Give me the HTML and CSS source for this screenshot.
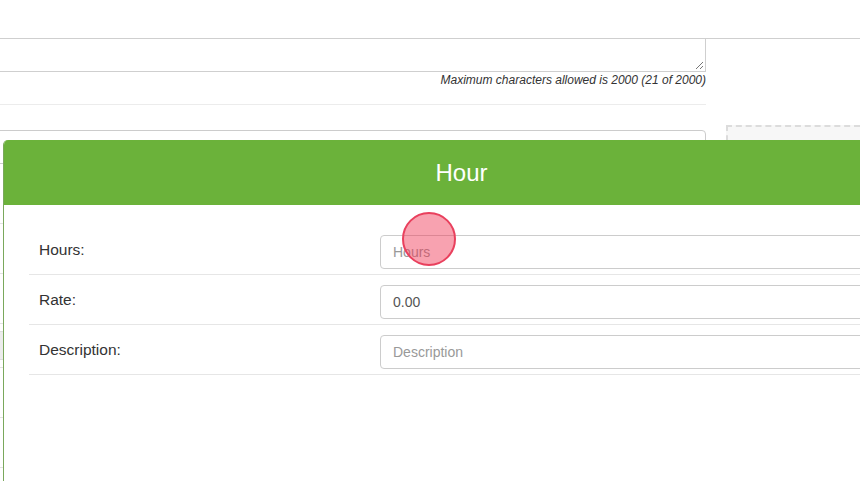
FILE: index.html
```html
<!DOCTYPE html>
<html lang="en">
<head>
<meta charset="utf-8">
<title>Hour</title>
<link rel="stylesheet" href="styles.css">
</head>
<body>
<div class="page">
  <div class="topbar"></div>
  <div class="layout">
    <div class="main">
      <div class="textarea">
        <svg class="grip" width="9" height="9" viewBox="0 0 9 9"><path d="M8 1 L1 8 M8 5 L5 8" stroke="#777" stroke-width="1" fill="none"/></svg>
      </div>
      <div class="hint">Maximum characters allowed is 2000 (21 of 2000)</div>
      <div class="sep"></div>
      <div class="field-input"></div>
      <div class="bg-row tall"></div>
      <div class="bg-row"></div>
      <div class="bg-row"></div>
      <div class="bg-gray"></div>
      <div class="bg-row short"></div>
      <div class="bg-row"></div>
      <div class="bg-row"></div>
    </div>
    <div class="side">
      <div class="dropzone"></div>
    </div>
  </div>

  <div class="modal">
    <div class="modal-header">Hour</div>
    <div class="modal-body">
      <div class="form-row">
        <label class="form-label">Hours:</label>
        <input class="form-input" type="text" placeholder="Hours">
      </div>
      <div class="form-row">
        <label class="form-label">Rate:</label>
        <input class="form-input" type="text" value="0.00">
      </div>
      <div class="form-row">
        <label class="form-label">Description:</label>
        <input class="form-input" type="text" placeholder="Description">
      </div>
    </div>
  </div>

  <div class="click-marker"></div>
</div>
</body>
</html>
```

FILE: styles.css
```css
* { box-sizing: border-box; }

html, body {
  margin: 0;
  padding: 0;
  background: #fff;
}

body {
  font-family: "Liberation Sans", Arial, sans-serif;
  color: #333;
  width: 860px;
  height: 481px;
  overflow: hidden;
}

.page {
  position: relative;
  width: 860px;
  height: 481px;
  overflow: hidden;
}

.topbar {
  height: 39px;
  border-bottom: 1px solid #cfcfcf;
}

.layout {
  display: flex;
  align-items: flex-start;
}

.main {
  width: 716px;
  margin-left: -10px;
  flex: none;
}

.textarea {
  position: relative;
  height: 33px;
  border: 1px solid #cfcfcf;
  border-top: none;
}

.grip {
  position: absolute;
  right: 1px;
  bottom: 1px;
}

.hint {
  font-size: 12px;
  line-height: 16px;
  font-style: italic;
  color: #333;
  text-align: right;
}

.sep {
  margin-top: 16px;
  border-top: 1px solid #ececec;
}

.field-input {
  margin-top: 25px;
  height: 34px;
  border: 1px solid #ccc;
  border-radius: 4px;
}

.bg-row {
  height: 50px;
  border-bottom: 1px solid #e3e3e3;
}

.bg-row.tall { height: 60px; }

.bg-gray {
  margin-top: 7px;
  height: 29px;
  background: #ececec;
  border-top: 1px solid #ddd;
  border-bottom: 1px solid #ddd;
}

.bg-row.short { height: 8px; }

.side {
  flex: 1;
  margin-left: 20px;
  margin-top: 86px;
}

.dropzone {
  height: 220px;
  background: #f7f7f7;
  border: 2px dashed #dcdcdc;
  border-right: none;
}

/* Modal */
.modal {
  position: absolute;
  left: 3px;
  top: 140px;
  width: 916px;
  height: 380px;
  background: #fff;
  border-left: 1px solid #7aa85c;
  border-radius: 5px 5px 0 0;
  overflow: hidden;
}

.modal-header {
  height: 65px;
  background: #6bb23a;
  color: #fff;
  font-size: 24px;
  line-height: 65px;
  text-align: center;
}

.modal-body {
  padding: 20px 30px 0 25px;
}

.form-row {
  display: grid;
  grid-template-columns: 341px 1fr;
  padding: 10px 0 5px 10px;
  border-bottom: 1px solid #e6e6e6;
}

.form-label {
  font-size: 15.5px;
  line-height: 20px;
  padding-top: 5px;
  color: #333;
}

.form-input {
  height: 34px;
  border: 1px solid #ccc;
  border-radius: 4px;
  padding: 6px 12px;
  font-family: "Liberation Sans", Arial, sans-serif;
  font-size: 14px;
  color: #555;
  background: #fff;
  outline: none;
}

.form-input::placeholder {
  color: #999;
}

.click-marker {
  position: absolute;
  left: 402px;
  top: 212px;
  width: 54px;
  height: 54px;
  border-radius: 50%;
  border: 2px solid #e9405d;
  background: rgba(240, 52, 82, 0.46);
}
```
